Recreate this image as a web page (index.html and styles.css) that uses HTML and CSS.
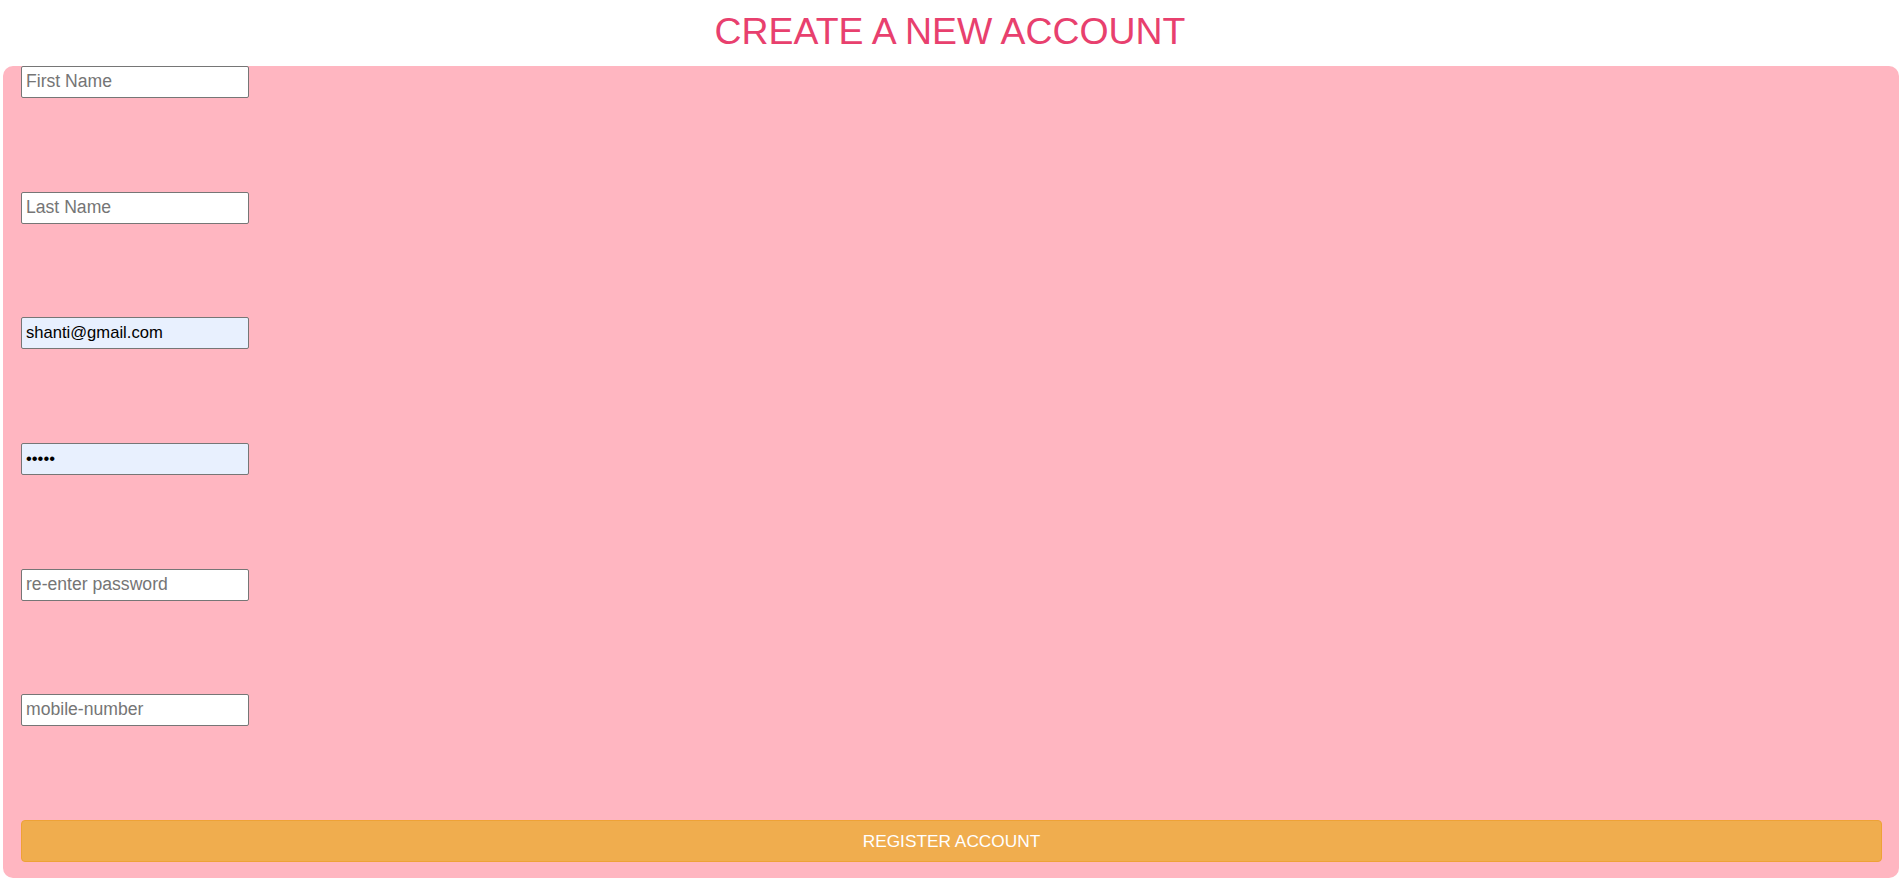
FILE: index.html
```html
<!DOCTYPE html>
<html lang="en">
<head>
<meta charset="utf-8">
<title>Create a new account</title>
<link rel="stylesheet" href="styles.css">
</head>
<body>
<h1 class="title">CREATE A NEW ACCOUNT</h1>
<form class="card">
  <input class="field" type="text" placeholder="First Name">
  <input class="field" type="text" placeholder="Last Name">
  <input class="field autofill" type="email" value="shanti@gmail.com">
  <input class="field autofill" type="password" value="12345">
  <input class="field" type="password" placeholder="re-enter password">
  <input class="field" type="text" placeholder="mobile-number">
  <button class="register" type="button">REGISTER ACCOUNT</button>
</form>
</body>
</html>
```
FILE: styles.css
```css
html, body {
  margin: 0;
  padding: 0;
  background: #ffffff;
  font-family: "Liberation Sans", Arial, sans-serif;
}

.title {
  margin: 11px 0 15px;
  font-size: 37.4px;
  line-height: 40px;
  font-weight: normal;
  text-align: center;
  color: #e8406e;
}

.card {
  margin: 0 1px 0 3px;
  padding: 0 17px 16px 18px;
  background: #ffb6c1;
  border-radius: 10px;
  display: flex;
  flex-direction: column;
  align-items: flex-start;
  gap: 93.7px;
}

.field {
  box-sizing: border-box;
  width: 228px;
  height: 32px;
  margin: 0;
  padding: 0 4px;
  border: 1px solid #767676;
  border-radius: 2px;
  background: #ffffff;
  font-family: "Liberation Sans", Arial, sans-serif;
  font-size: 16.6px;
  color: #000000;
}

.field::placeholder {
  color: #757575;
  font-size: 17.6px;
}

.field.autofill {
  background: #e8f0fe;
}

.register {
  box-sizing: border-box;
  align-self: stretch;
  height: 42px;
  margin: 0;
  border: 1px solid #eea236;
  border-radius: 4px;
  background: #f0ad4e;
  color: #ffffff;
  font-family: "Liberation Sans", Arial, sans-serif;
  font-size: 17.3px;
  cursor: pointer;
}
```
